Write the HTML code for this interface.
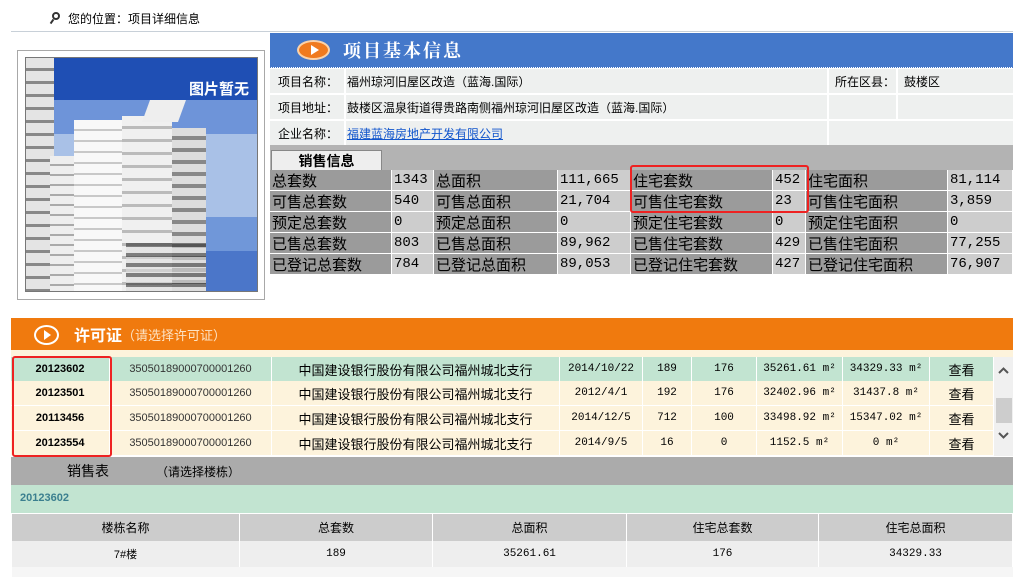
<!DOCTYPE html>
<html><head><meta charset="utf-8"><style>
*{margin:0;padding:0;box-sizing:border-box}
body{width:1023px;height:577px;overflow:hidden;background:#fff;position:relative;font-family:"Liberation Sans","Noto Sans CJK SC",sans-serif;font-size:12px;color:#000}
.a{position:absolute}
.c{position:absolute;display:flex;align-items:center;white-space:nowrap;overflow:hidden}
.cc{justify-content:center}
.serif{font-family:"Liberation Mono","Noto Sans CJK SC",monospace}
</style></head><body>
<!-- breadcrumb -->
<div class="a" style="left:52px;top:12px;width:8px;height:8px;border:2px solid #333;border-radius:50%"></div>
<div class="a" style="left:51px;top:19px;width:2px;height:5px;background:#333;transform:rotate(35deg)"></div>
<div class="c" style="left:68px;top:10px;height:16px;font-size:12px">您的位置：项目详细信息</div>
<div class="a" style="left:11px;top:31px;width:1002px;height:1px;background:#c8d0d8"></div>

<!-- image box -->
<div class="a" style="left:17px;top:50px;width:248px;height:250px;border:1px solid #a8a8a8"></div>
<div class="a" style="left:25px;top:57px;width:233px;height:235px;overflow:hidden;border:1px solid #777">
 <div class="a" style="left:0;top:0;width:233px;height:42px;background:#1f4fb4"></div>
 <div class="a" style="left:0;top:42px;width:233px;height:34px;background:#6e94d9"></div>
 <div class="a" style="left:0;top:76px;width:233px;height:83px;background:#a9c1e7"></div>
 <div class="a" style="left:0;top:159px;width:233px;height:34px;background:#7097d9"></div>
 <div class="a" style="left:0;top:193px;width:233px;height:42px;background:#4b76c9"></div>
 <div class="a" style="left:0;top:0;width:28px;height:235px;background:repeating-linear-gradient(180deg,#e4e4e4 0 10px,#888 10px 13px)"></div>
 <div class="a" style="left:24px;top:98px;width:26px;height:137px;background:repeating-linear-gradient(180deg,#eee 0 8px,#aaa 8px 10px)"></div>
 <div class="a" style="left:48px;top:62px;width:48px;height:173px;background:repeating-linear-gradient(180deg,#f8f8f8 0 9px,#c8c8c8 9px 11px)"></div>
 <div class="a" style="left:96px;top:58px;width:50px;height:177px;background:repeating-linear-gradient(180deg,#f0f0f0 0 10px,#bbb 10px 13px)"></div>
 <div class="a" style="left:146px;top:70px;width:34px;height:165px;background:repeating-linear-gradient(180deg,#ddd 0 8px,#888 8px 12px)"></div>
 <div class="a" style="left:120px;top:42px;width:36px;height:22px;background:#eee;transform:skewX(-20deg)"></div>
 <div class="a" style="left:100px;top:185px;width:80px;height:50px;background:repeating-linear-gradient(180deg,#333 0 4px,#ddd 4px 10px);opacity:.6"></div>
 <div class="c" style="right:8px;top:20px;height:20px;color:#fff;font-weight:bold;font-size:15px">图片暂无</div>
</div>

<!-- blue header -->
<div class="a" style="left:270px;top:33px;width:743px;height:34px;background:#4478ca"></div>
<div class="a" style="left:270px;top:67px;width:743px;height:1px;border-top:1px dotted #4478ca"></div>
<div class="a" style="left:297px;top:40px;width:33px;height:20px;border-radius:50%;background:#f07a1e;border:2px solid #fbd2a8"></div>
<div class="a" style="left:311px;top:45px;width:0;height:0;border-left:8px solid #fff;border-top:5px solid transparent;border-bottom:5px solid transparent"></div>
<div class="c" style="left:343px;top:37px;height:26px;color:#fff;font-weight:bold;font-size:18px;letter-spacing:2px;font-family:'Noto Serif CJK SC',serif">项目基本信息</div>

<!-- info rows -->
<div class="a" style="left:270px;top:69px;width:74px;height:24px;background:#eef0ef"></div>
<div class="a" style="left:346px;top:69px;width:481px;height:24px;background:#eef0ef"></div>
<div class="a" style="left:829px;top:69px;width:67px;height:24px;background:#eef0ef"></div>
<div class="a" style="left:898px;top:69px;width:115px;height:24px;background:#eef0ef"></div>
<div class="a" style="left:270px;top:95px;width:74px;height:24px;background:#eef0ef"></div>
<div class="a" style="left:346px;top:95px;width:481px;height:24px;background:#eef0ef"></div>
<div class="a" style="left:829px;top:95px;width:67px;height:24px;background:#eef0ef"></div>
<div class="a" style="left:898px;top:95px;width:115px;height:24px;background:#eef0ef"></div>
<div class="a" style="left:270px;top:121px;width:74px;height:24px;background:#eef0ef"></div>
<div class="a" style="left:346px;top:121px;width:481px;height:24px;background:#eef0ef"></div>
<div class="a" style="left:829px;top:121px;width:184px;height:24px;background:#eef0ef"></div>
<div class="c" style="left:278px;top:69px;height:24px">项目名称：</div>
<div class="c" style="left:347px;top:69px;height:24px">福州琼河旧屋区改造（蓝海.国际）</div>
<div class="c" style="left:835px;top:69px;height:24px">所在区县：</div>
<div class="c" style="left:904px;top:69px;height:24px">鼓楼区</div>
<div class="c" style="left:278px;top:95px;height:24px">项目地址：</div>
<div class="c" style="left:347px;top:95px;height:24px">鼓楼区温泉街道得贵路南侧福州琼河旧屋区改造（蓝海.国际）</div>
<div class="c" style="left:278px;top:121px;height:24px">企业名称：</div>
<div class="c" style="left:347px;top:121px;height:24px;color:#1155cc;text-decoration:underline">福建蓝海房地产开发有限公司</div>

<!-- sales tab -->
<div class="a" style="left:270px;top:145px;width:743px;height:25px;background:#b3b3b3"></div>
<div class="c cc" style="left:271px;top:150px;width:111px;height:20px;background:#eeeeee;border:1px solid #888;border-bottom:none;font-weight:bold;font-size:14px">销售信息</div>

<!-- sales table -->
<div id="st"></div>
<script>
var cols=[[270,122,1],[392,42,0],[434,124,1],[558,73,0],[631,142,1],[773,33,0],[806,142,1],[948,65,0]];
var rows=[["总套数","1343","总面积","111,665","住宅套数","452","住宅面积","81,114"],
["可售总套数","540","可售总面积","21,704","可售住宅套数","23","可售住宅面积","3,859"],
["预定总套数","0","预定总面积","0","预定住宅套数","0","预定住宅面积","0"],
["已售总套数","803","已售总面积","89,962","已售住宅套数","429","已售住宅面积","77,255"],
["已登记总套数","784","已登记总面积","89,053","已登记住宅套数","427","已登记住宅面积","76,907"]];
var h='',ys=[170,191,212,233,254];
rows.forEach(function(r,i){cols.forEach(function(c,j){
h+='<div class="c'+(c[2]?'':' serif')+'" style="left:'+c[0]+'px;top:'+ys[i]+'px;width:'+(c[1]-1)+'px;height:20px;padding-left:2px;font-size:'+(c[2]?'15':'14')+'px;background:'+(c[2]?'#9b9b9b':'#cdcdcd')+'">'+r[j]+'</div>';});});
document.getElementById('st').outerHTML=h;
</script>
<div class="a" style="left:630px;top:165px;width:179px;height:48px;border:2px solid #e22;border-radius:3px"></div>

<!-- orange bar -->
<div class="a" style="left:11px;top:318px;width:1002px;height:32px;background:#f07a0e"></div>
<div class="a" style="left:34px;top:325px;width:25px;height:20px;border-radius:50%;border:2px solid #fff;background:#f07a0e"></div>
<div class="a" style="left:44px;top:330px;width:0;height:0;border-left:7px solid #fff;border-top:5px solid transparent;border-bottom:5px solid transparent"></div>
<div class="c" style="left:74px;top:322px;height:24px;color:#fff;font-weight:bold;font-size:16px">许可证<span style="font-weight:normal;font-size:13px;color:#fde3c4">（请选择许可证）</span></div>
<div class="a" style="left:11px;top:350px;width:1002px;height:7px;background:#fdf3dc"></div>

<!-- permit list -->
<div id="pl"></div>
<script>
var pc=[[11,99],[110,162],[272,288],[560,83],[643,49],[692,65],[757,86],[843,87],[930,64]];
var pr=[["20123602","35050189000700001260","中国建设银行股份有限公司福州城北支行","2014/10/22","189","176","35261.61 m²","34329.33 m²","查看"],
["20123501","35050189000700001260","中国建设银行股份有限公司福州城北支行","2012/4/1","192","176","32402.96 m²","31437.8 m²","查看"],
["20113456","35050189000700001260","中国建设银行股份有限公司福州城北支行","2014/12/5","712","100","33498.92 m²","15347.02 m²","查看"],
["20123554","35050189000700001260","中国建设银行股份有限公司福州城北支行","2014/9/5","16","0","1152.5 m²","0 m²","查看"]];
var h2='',py=[357,381,406,431];
pr.forEach(function(r,i){pc.forEach(function(c,j){
var st='font-size:11px;';if(j==0)st='font-weight:bold;font-size:11px;';if(j==2||j==8)st='font-size:13px;';if(j==1)st='font-size:11px;color:#333;';
var cls=(j>=3&&j<=7)?' serif':'';
h2+='<div class="c cc'+cls+'" style="left:'+c[0]+'px;top:'+py[i]+'px;width:'+(c[1]-1)+'px;height:24px;'+st+'background:'+(i==0?'#c2e4d1':'#fdf3dc')+'">'+r[j]+'</div>';});});
document.getElementById('pl').outerHTML=h2;
</script>
<div class="a" style="left:994px;top:357px;width:19px;height:99px;background:#f0f0f0"></div>
<div class="a" style="left:996px;top:398px;width:16px;height:25px;background:#cdcdcd"></div>
<svg class="a" style="left:997px;top:366px" width="13" height="10"><path d="M2 7 L6.5 2.5 L11 7" stroke="#555" stroke-width="2" fill="none"/></svg>
<svg class="a" style="left:997px;top:430px" width="13" height="10"><path d="M2 3 L6.5 7.5 L11 3" stroke="#555" stroke-width="2" fill="none"/></svg>
<div class="a" style="left:12px;top:356px;width:100px;height:101px;border:2px solid #e22;border-radius:3px"></div>

<!-- sales sheet -->
<div class="a" style="left:11px;top:457px;width:1002px;height:28px;background:#ababab"></div>
<div class="c" style="left:67px;top:457px;height:28px;font-size:14px">销售表</div>
<div class="c" style="left:156px;top:457px;height:28px;font-size:12px">（请选择楼栋）</div>
<div class="a" style="left:11px;top:485px;width:1002px;height:28px;background:#c2e4d1"></div>
<div class="c" style="left:20px;top:485px;height:26px;font-weight:bold;font-size:11px;color:#3b7f8f">20123602</div>
<div id="bt"></div>
<script>
var bc=[[12,228],[240,193],[433,194],[627,192],[819,194]];
var hd=["楼栋名称","总套数","总面积","住宅总套数","住宅总面积"],vd=["7#楼","189","35261.61","176","34329.33"];
var h3='';bc.forEach(function(c,j){
h3+='<div class="c cc" style="left:'+c[0]+'px;top:514px;width:'+(c[1]-1)+'px;height:27px;background:#cccccc;font-size:12px">'+hd[j]+'</div>';
h3+='<div class="c cc'+(j?' serif':'')+'" style="left:'+c[0]+'px;top:541px;width:'+(c[1]-1)+'px;height:26px;background:#eeeeee;font-size:11px">'+vd[j]+'</div>';});
h3+='<div class="a" style="left:12px;top:567px;width:1001px;height:10px;background:#f6f6f6"></div>';
document.getElementById('bt').outerHTML=h3;
</script>
</body></html>
